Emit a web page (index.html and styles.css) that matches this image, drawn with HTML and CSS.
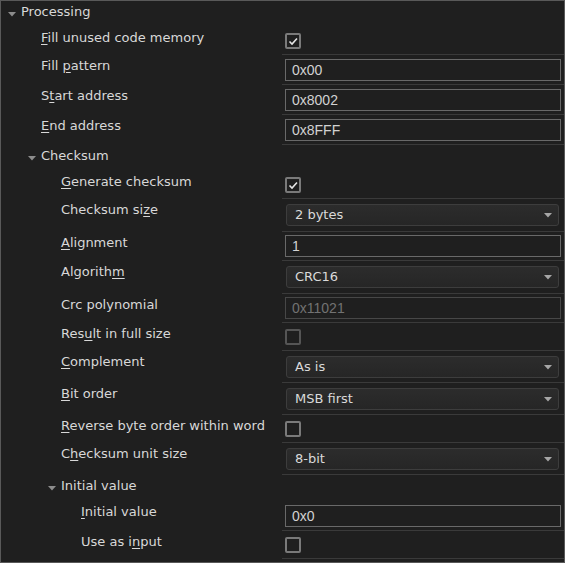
FILE: index.html
```html
<!DOCTYPE html>
<html>
<head>
<meta charset="utf-8">
<link rel="stylesheet" href="styles.css">
</head>
<body>
<div class="panel">
  <div class="row group g-top">
    <div class="name lvl0"><svg class="arrow" width="8" height="5" viewBox="0 0 8 5"><path d="M0 0H8L4 4.5Z"/></svg><span>Processing</span></div>
    <div class="value"></div>
  </div>
  <div class="row cb">
    <div class="name lvl1"><span><u>F</u>ill unused code memory</span></div>
    <div class="value"><span class="check on"><svg width="11" height="11" viewBox="0 0 11 11"><path d="M1.5 5.5L4 8L9 2.5"/></svg></span></div>
  </div>
  <div class="row in">
    <div class="name lvl1"><span>Fill <u>p</u>attern</span></div>
    <div class="value"><span class="field">0x00</span></div>
  </div>
  <div class="row in">
    <div class="name lvl1"><span>S<u>t</u>art address</span></div>
    <div class="value"><span class="field">0x8002</span></div>
  </div>
  <div class="row in">
    <div class="name lvl1"><span><u>E</u>nd address</span></div>
    <div class="value"><span class="field">0x8FFF</span></div>
  </div>
  <div class="row group">
    <div class="name lvl1g"><svg class="arrow" width="8" height="5" viewBox="0 0 8 5"><path d="M0 0H8L4 4.5Z"/></svg><span>Checksum</span></div>
    <div class="value"></div>
  </div>
  <div class="row cb">
    <div class="name lvl2"><span><u>G</u>enerate checksum</span></div>
    <div class="value"><span class="check on"><svg width="11" height="11" viewBox="0 0 11 11"><path d="M1.5 5.5L4 8L9 2.5"/></svg></span></div>
  </div>
  <div class="row dd tall">
    <div class="name lvl2"><span>Checksum si<u>z</u>e</span></div>
    <div class="value"><span class="select"><span>2 bytes</span><svg class="caret" width="8" height="5" viewBox="0 0 8 5"><path d="M0 0H8L4 4.5Z"/></svg></span></div>
  </div>
  <div class="row in short">
    <div class="name lvl2"><span><u>A</u>lignment</span></div>
    <div class="value"><span class="field">1</span></div>
  </div>
  <div class="row dd tall">
    <div class="name lvl2"><span>Algorith<u>m</u></span></div>
    <div class="value"><span class="select"><span>CRC16</span><svg class="caret" width="8" height="5" viewBox="0 0 8 5"><path d="M0 0H8L4 4.5Z"/></svg></span></div>
  </div>
  <div class="row in short">
    <div class="name lvl2"><span>Crc polynomial</span></div>
    <div class="value"><span class="field disabled">0x11021</span></div>
  </div>
  <div class="row cb">
    <div class="name lvl2"><span>Res<u>u</u>lt in full size</span></div>
    <div class="value"><span class="check disabled"></span></div>
  </div>
  <div class="row dd">
    <div class="name lvl2"><span><u>C</u>omplement</span></div>
    <div class="value"><span class="select"><span>As is</span><svg class="caret" width="8" height="5" viewBox="0 0 8 5"><path d="M0 0H8L4 4.5Z"/></svg></span></div>
  </div>
  <div class="row dd">
    <div class="name lvl2"><span><u>B</u>it order</span></div>
    <div class="value"><span class="select"><span>MSB first</span><svg class="caret" width="8" height="5" viewBox="0 0 8 5"><path d="M0 0H8L4 4.5Z"/></svg></span></div>
  </div>
  <div class="row cb">
    <div class="name lvl2"><span><u>R</u>everse byte order within word</span></div>
    <div class="value"><span class="check"></span></div>
  </div>
  <div class="row dd">
    <div class="name lvl2"><span>C<u>h</u>ecksum unit size</span></div>
    <div class="value"><span class="select"><span>8-bit</span><svg class="caret" width="8" height="5" viewBox="0 0 8 5"><path d="M0 0H8L4 4.5Z"/></svg></span></div>
  </div>
  <div class="row group">
    <div class="name lvl2g"><svg class="arrow" width="8" height="5" viewBox="0 0 8 5"><path d="M0 0H8L4 4.5Z"/></svg><span>Initial value</span></div>
    <div class="value"></div>
  </div>
  <div class="row in">
    <div class="name lvl3"><span><u>I</u>nitial value</span></div>
    <div class="value"><span class="field">0x0</span></div>
  </div>
  <div class="row cb">
    <div class="name lvl3"><span>Use as i<u>n</u>put</span></div>
    <div class="value"><span class="check"></span></div>
  </div>
</div>
</body>
</html>
```

FILE: styles.css
```css
html, body {
  margin: 0;
  padding: 0;
  background: #1f1f1f;
}

.panel {
  box-sizing: border-box;
  width: 565px;
  height: 563px;
  border: 1px solid #595959;
  background: #1f1f1f;
  display: flex;
  flex-direction: column;
  font-family: "DejaVu Sans", Verdana, sans-serif;
  font-size: 13px;
  color: #d8d8d8;
  overflow: hidden;
}

.row {
  display: flex;
  flex: none;
}

.row.group { height: 26px; }
.row.cb { height: 28px; }
.row.in { height: 30px; }
.row.in.short { height: 29px; }
.row.dd { height: 32px; }
.row.dd.tall { height: 33px; }

.name {
  width: 281px;
  flex: none;
  box-sizing: border-box;
  padding-top: 3px;
  line-height: 16px;
  white-space: nowrap;
  display: flex;
  align-items: flex-start;
}

.name u {
  text-decoration: underline;
  text-underline-offset: 2px;
}

.lvl0 { padding-left: 7px; }
.lvl1 { padding-left: 40px; }
.lvl1g { padding-left: 27px; }
.lvl2 { padding-left: 60px; }
.lvl2g { padding-left: 47px; }
.lvl3 { padding-left: 80px; }

.arrow {
  flex: none;
  margin-top: 8px;
  margin-right: 5px;
  fill: #8c8c8c;
}

.value {
  flex: 1;
  box-sizing: border-box;
  border-bottom: 1px solid #3a3a3a;
  padding-left: 3px;
  padding-right: 2px;
  display: flex;
  align-items: flex-start;
}

.group .value { border-bottom: none; }

.cb .value { padding-top: 6px; }
.in .value { padding-top: 4px; }
.in.short .value { padding-top: 3px; }
.dd .value { padding-top: 5px; }

.check {
  box-sizing: border-box;
  width: 16px;
  height: 16px;
  border: 2px solid #7a7a7a;
  border-radius: 2px;
  display: flex;
  align-items: center;
  justify-content: center;
}

.check.disabled { border-color: #555555; }

.check svg path {
  fill: none;
  stroke: #e6e6e6;
  stroke-width: 1.6;
}

.field {
  box-sizing: border-box;
  width: 276px;
  height: 22px;
  border: 1px solid #696969;
  padding-left: 6px;
  font-family: "Liberation Sans", Arial, sans-serif;
  font-size: 14px;
  line-height: 20px;
  color: #d2d2d2;
}

.field.disabled {
  border-color: #474747;
  color: #727272;
}

.select {
  box-sizing: border-box;
  width: 273px;
  height: 22px;
  margin-left: 1px;
  border: 1px solid #3d3d3d;
  border-radius: 3px;
  background: linear-gradient(#2c2c2c, #262626);
  padding-left: 8px;
  padding-right: 6px;
  line-height: 20px;
  color: #dadada;
  display: flex;
  align-items: center;
  justify-content: space-between;
}

.caret {
  fill: #a6a6a6;
  margin-top: 1px;
}
```
